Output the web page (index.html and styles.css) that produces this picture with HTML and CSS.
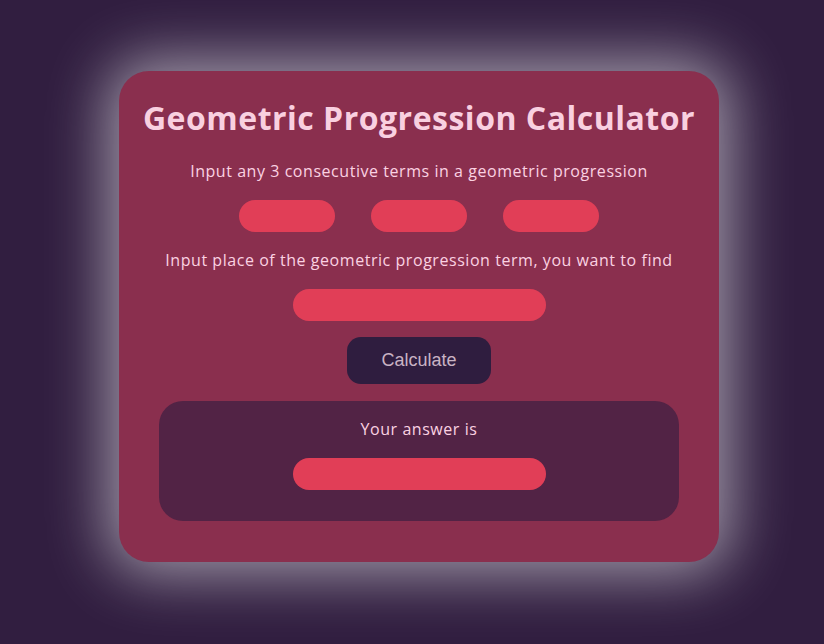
FILE: index.html
```html
<!DOCTYPE html>
<html>
<head>
<meta charset="utf-8">
<link rel="stylesheet" href="styles.css">
</head>
<body>
<main class="card">
  <h1 class="title">Geometric Progression Calculator</h1>
  <p class="label">Input any 3 consecutive terms in a geometric progression</p>
  <div class="terms">
    <input class="field small" type="text">
    <input class="field small" type="text">
    <input class="field small" type="text">
  </div>
  <p class="label">Input place of the geometric progression term, you want to find</p>
  <input class="field wide" type="text">
  <button class="calc">Calculate</button>
  <section class="result">
    <p class="label">Your answer is</p>
    <input class="field wide" type="text" readonly>
  </section>
</main>
</body>
</html>
```
FILE: styles.css
```css
html, body {
  margin: 0;
  padding: 0;
}
body {
  background: #311e40;
  width: 824px;
  height: 644px;
  overflow: hidden;
  font-family: "Open Sans", "DejaVu Sans", sans-serif;
}
.card {
  box-sizing: border-box;
  width: 600px;
  height: 491px;
  margin: 71px 0 0 119px;
  background: #8a2f4e;
  border-radius: 30px;
  box-shadow: 0 0 60px 12px rgba(255, 255, 255, 0.55);
  padding: 23px 0 0;
  display: flex;
  flex-direction: column;
  align-items: center;
}
.title {
  margin: 0;
  font-size: 32px;
  line-height: 48px;
  font-weight: 700;
  letter-spacing: 0.5px;
  color: #f9d0e0;
}
.label {
  margin: 17px 0 0;
  font-size: 16px;
  line-height: 24px;
  letter-spacing: 0.55px;
  color: #fbd2e2;
}
.terms {
  margin-top: 17px;
  display: flex;
  gap: 36px;
}
.field {
  box-sizing: border-box;
  height: 32px;
  border: none;
  border-radius: 16px;
  background: #e13e57;
  outline: none;
  padding: 0 12px;
}
.small {
  width: 96px;
}
.terms + .label {
  margin-top: 16px;
}
.wide {
  width: 253px;
  margin-top: 17px;
}
.calc {
  margin-top: 16px;
  width: 144px;
  height: 47px;
  border: none;
  border-radius: 14px;
  background: #2f1d3f;
  color: #c9b3c4;
  font-family: "Liberation Sans", Arial, sans-serif;
  font-size: 18px;
}
.result {
  box-sizing: border-box;
  margin-top: 17px;
  width: 520px;
  height: 120px;
  background: #522345;
  border-radius: 24px;
  padding-top: 16px;
  display: flex;
  flex-direction: column;
  align-items: center;
}
.result .label {
  margin: 0;
}
```
